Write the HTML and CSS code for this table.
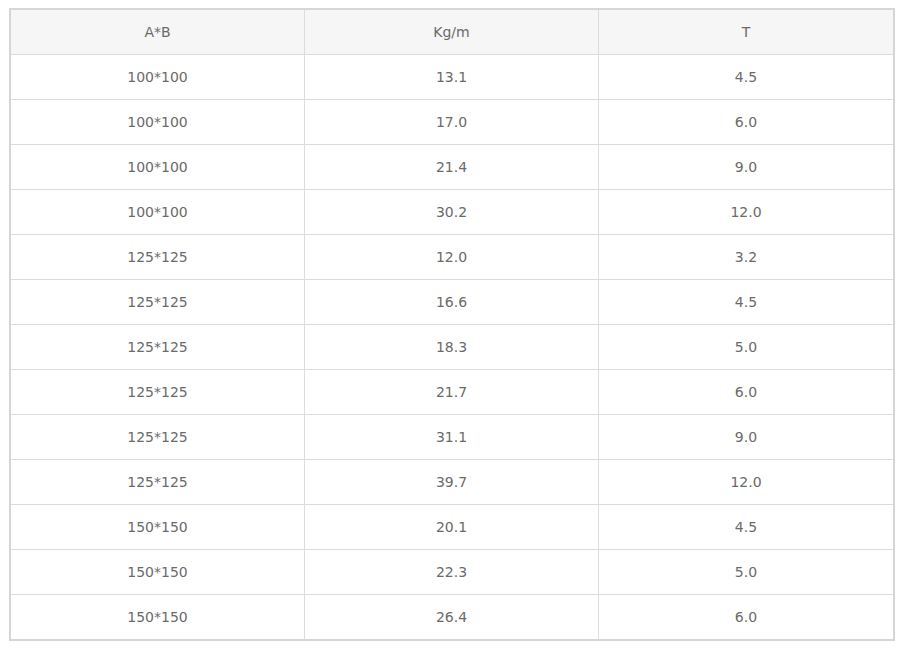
FILE: index.html
```html
<!DOCTYPE html>
<html>
<head>
<meta charset="utf-8">
<link rel="stylesheet" href="styles.css">
</head>
<body>
<table class="spec">
<colgroup><col class="c1"><col class="c2"><col class="c3"></colgroup>
<thead>
<tr><th>A*B</th><th>Kg/m</th><th>T</th></tr>
</thead>
<tbody>
<tr><td>100*100</td><td>13.1</td><td>4.5</td></tr>
<tr><td>100*100</td><td>17.0</td><td>6.0</td></tr>
<tr><td>100*100</td><td>21.4</td><td>9.0</td></tr>
<tr><td>100*100</td><td>30.2</td><td>12.0</td></tr>
<tr><td>125*125</td><td>12.0</td><td>3.2</td></tr>
<tr><td>125*125</td><td>16.6</td><td>4.5</td></tr>
<tr><td>125*125</td><td>18.3</td><td>5.0</td></tr>
<tr><td>125*125</td><td>21.7</td><td>6.0</td></tr>
<tr><td>125*125</td><td>31.1</td><td>9.0</td></tr>
<tr><td>125*125</td><td>39.7</td><td>12.0</td></tr>
<tr><td>150*150</td><td>20.1</td><td>4.5</td></tr>
<tr><td>150*150</td><td>22.3</td><td>5.0</td></tr>
<tr><td>150*150</td><td>26.4</td><td>6.0</td></tr>
</tbody>
</table>
</body>
</html>
```
FILE: styles.css
```css
html, body { background: #fff; }
body {
  margin: 8px 0 0 9px;
  font-family: "DejaVu Sans", "Noto Sans", sans-serif;
  font-size: 14px;
  color: #6a6a6a;
}
.spec {
  width: 886px;
  table-layout: fixed;
  border-collapse: separate;
  border-spacing: 0;
  border: 2px solid #d6d6d6;
}
.c1 { width: 294px; }
.c2 { width: 294px; }
.c3 { width: 294px; }
.spec th, .spec td {
  height: 44px;
  padding: 0;
  text-align: center;
  vertical-align: middle;
  font-weight: normal;
  border-right: 1px solid #dcdcdc;
  border-bottom: 1px solid #dcdcdc;
  line-height: 20px;
}
.spec th:last-child, .spec td:last-child { border-right: none; }
.spec tbody tr:last-child td { border-bottom: none; }
.spec th { background: #f6f6f6; }
```
